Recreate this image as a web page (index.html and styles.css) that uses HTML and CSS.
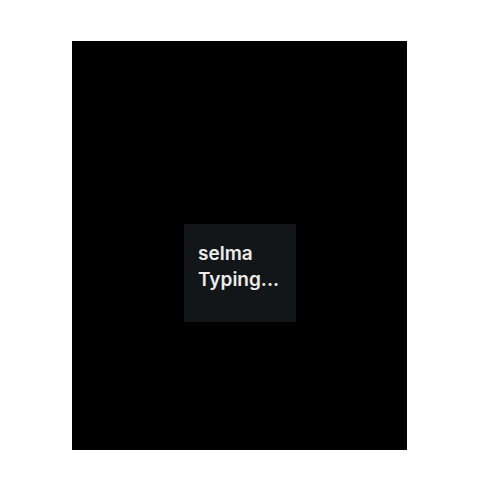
FILE: index.html
```html
<!DOCTYPE html>
<html>
<head>
<meta charset="utf-8">
<link rel="stylesheet" href="styles.css">
</head>
<body>
<div class="screen">
  <div class="bubble">
    <div class="name">selma</div>
    <div class="status">Typing...</div>
  </div>
</div>
</body>
</html>
```
FILE: styles.css
```css
html, body {
  margin: 0;
  padding: 0;
  background: #ffffff;
}
.screen {
  margin-left: 72px;
  margin-top: 41px;
  width: 335px;
  height: 409px;
  background: #000000;
  padding-top: 183px;
  padding-left: 112px;
  box-sizing: border-box;
  display: flex;
  flex-direction: column;
  align-items: flex-start;
}
.bubble {
  width: 112px;
  height: 98px;
  box-sizing: border-box;
  background: #131619;
  padding: 17px 0 0 14px;
  font-family: Inter, "Liberation Sans", sans-serif;
  font-weight: 600;
  font-size: 19px;
  line-height: 26px;
  color: #ececec;
}
```
